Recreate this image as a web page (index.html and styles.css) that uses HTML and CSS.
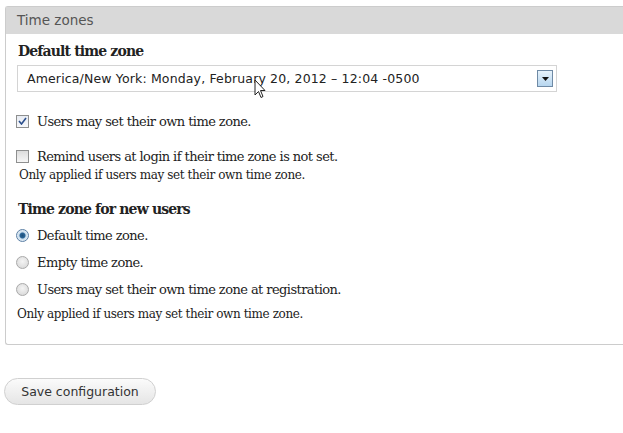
FILE: index.html
```html
<!DOCTYPE html>
<html>
<head>
<meta charset="utf-8">
<link rel="stylesheet" href="styles.css">
</head>
<body>
<div class="page">
  <fieldset class="panel">
    <div class="legend">Time zones</div>
    <div class="body">
      <div class="field">
        <div class="heading">Default time zone</div>
        <div class="select">
          <span class="select-text">America/New York: Monday, February 20, 2012 – 12:04 -0500</span>
          <span class="select-btn"><svg width="7" height="4" viewBox="0 0 7 4"><path d="M0 0h7L3.5 4z" fill="#111"/></svg></span>
          <svg class="cursor" width="13" height="20" viewBox="0 0 13 20"><path d="M1 1v15l3.5-3.5 2.5 6 2-1-2.5-6H11z" fill="#fff" stroke="#222" stroke-width="1"/></svg>
        </div>
      </div>
      <label class="check"><span class="box checked"><svg width="9" height="8" viewBox="0 0 9 8"><path d="M1 4l2.5 3L8 1" fill="none" stroke="#2b4f8c" stroke-width="1.6"/></svg></span>Users may set their own time zone.</label>
      <label class="check second"><span class="box"></span>Remind users at login if their time zone is not set.</label>
      <div class="desc first-desc">Only applied if users may set their own time zone.</div>
      <div class="heading h2">Time zone for new users</div>
      <div class="radios">
        <label class="radio"><span class="dot on"></span>Default time zone.</label>
        <label class="radio"><span class="dot"></span>Empty time zone.</label>
        <label class="radio"><span class="dot"></span>Users may set their own time zone at registration.</label>
      </div>
      <div class="desc">Only applied if users may set their own time zone.</div>
    </div>
  </fieldset>
  <div class="actions"><button class="btn">Save configuration</button></div>
</div>
</body>
</html>
```

FILE: styles.css
```css
html, body { margin: 0; padding: 0; background: #fff; }
body { width: 623px; height: 433px; overflow: hidden; }
.page { padding: 6px 0 0 5px; }
.panel {
  margin: 0;
  padding: 0;
  border: 1px solid #cccccc;
  border-right: none;
  border-radius: 3px 0 0 3px;
  min-width: 0;
  width: 640px;
  box-sizing: border-box;
  height: 339px;
}
.legend {
  background: #d9d9d9;
  height: 27px;
  line-height: 27px;
  padding-left: 11px;
  font-family: "DejaVu Sans", sans-serif;
  font-size: 13.5px;
  color: #555;
}
.body { padding: 8px 0 0 11px; }
.heading {
  font-family: "DejaVu Serif", serif;
  font-weight: bold;
  font-size: 14px;
  color: #222;
  line-height: 18px;
  letter-spacing: -0.85px;
  margin-left: 1px;
}
.select {
  position: relative;
  margin-top: 5px;
  width: 540px;
  height: 27px;
  border: 1px solid #d4d4d4;
  box-sizing: border-box;
  display: flex;
  align-items: center;
  padding-left: 9px;
}
.select-text {
  font-family: "DejaVu Sans", sans-serif;
  font-size: 12.5px;
  color: #222;
  flex: 1;
  letter-spacing: 0.15px;
}
.select-btn {
  width: 16px;
  height: 17px;
  border: 1px solid #6f8aa5;
  background: linear-gradient(#e6f2fb, #b7d6ef);
  box-sizing: border-box;
  display: flex;
  align-items: center;
  justify-content: center;
  margin-right: 3px;
}
.cursor { position: absolute; left: 236px; top: 13px; }
.check, .radio {
  display: flex;
  align-items: center;
  font-family: "DejaVu Serif", serif;
  font-size: 13px;
  color: #222;
  letter-spacing: -0.57px;
}
.check { margin-top: 21px; height: 16px; margin-left: -1px; }
.check.second { margin-top: 19px; }
.box {
  width: 11px;
  height: 11px;
  border: 1px solid #8e8f8f;
  background: linear-gradient(#dcdcdc, #f6f6f6);
  margin-right: 8px;
  display: flex;
  align-items: center;
  justify-content: center;
  letter-spacing: 0;
}
.box.checked { background: linear-gradient(#e8ecf3, #f6f7fa); }
.desc {
  font-family: "DejaVu Serif", serif;
  font-size: 12px;
  color: #222;
  letter-spacing: -0.4px;
  line-height: 16px;
}
.first-desc { margin-top: 3px; margin-left: 2px; }
.h2 { margin-top: 17px; }
.radios { margin-top: 9px; display: flex; flex-direction: column; gap: 10px; }
.radio { height: 17px; margin-left: -1px; }
.dot {
  width: 11px;
  height: 11px;
  border-radius: 50%;
  border: 1px solid #a9a9a9;
  background: radial-gradient(circle at 50% 40%, #f4f4f4, #d4d4d4);
  margin-right: 8px;
  box-sizing: content-box;
}
.dot.on {
  border-color: #5b7fa5;
  background: radial-gradient(circle, #1f4f7a 0, #2a6597 2.5px, #c8dcec 3.5px, #e9f1f8 6px);
}
.radios + .desc { margin-top: 8px; }
.actions { padding: 33px 0 0 0; margin-left: -1px; }
.btn {
  width: 152px;
  height: 27px;
  border: 1px solid #d0d0d0;
  border-radius: 14px;
  background: linear-gradient(#fbfbfb, #e5e5e5);
  font-family: "DejaVu Sans", sans-serif;
  font-size: 12.5px;
  color: #333;
  padding: 0;
}
```
